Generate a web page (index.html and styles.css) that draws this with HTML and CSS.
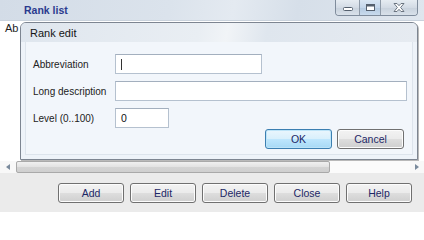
FILE: index.html
```html
<!DOCTYPE html>
<html>
<head>
<meta charset="utf-8">
<link rel="stylesheet" href="styles.css">
</head>
<body>
<div class="window">
  <div class="titlebar">
    <span class="title">Rank list</span>
    <div class="controls">
      <div class="ctl ctl-min"><svg width="12" height="8" viewBox="0 0 12 8"><rect x="1.5" y="3.5" width="9" height="3" rx="1" fill="#fff" stroke="#55606e"/></svg></div>
      <div class="ctl ctl-max"><svg width="11" height="9" viewBox="0 0 11 9"><rect x="1.5" y="1.5" width="8" height="6" fill="#fff" stroke="#55606e"/><rect x="2" y="2" width="7" height="1.5" fill="#55606e"/></svg></div>
      <div class="ctl ctl-close"><svg width="14" height="11" viewBox="0 0 14 11"><path d="M2 1.5h3l2 2.2 2-2.2h3l-3.4 4 3.4 4h-3l-2-2.2-2 2.2h-3l3.4-4z" fill="#fff" stroke="#6a7480" stroke-linejoin="round"/></svg></div>
    </div>
  </div>
  <div class="list">
    <div class="list-head"><span class="col">Ab</span></div>
    <div class="list-body"></div>
    <div class="hscroll">
      <div class="arrow left"><svg width="4" height="6" viewBox="0 0 4 6"><path d="M4 0v6L0 3z" fill="#7a8a9c"/></svg></div>
      <div class="thumb"></div>
      <div class="track"></div>
      <div class="arrow right"><svg width="4" height="6" viewBox="0 0 4 6"><path d="M0 0v6l4-3z" fill="#7a8a9c"/></svg></div>
    </div>
  </div>
  <div class="footer">
    <button class="btn">Add</button>
    <button class="btn">Edit</button>
    <button class="btn">Delete</button>
    <button class="btn">Close</button>
    <button class="btn">Help</button>
  </div>

  <div class="dialog">
    <div class="dlg-title">Rank edit</div>
    <div class="dlg-body">
      <div class="form">
        <label class="lbl">Abbreviation</label>
        <div class="input w1"><span class="caret"></span></div>
        <label class="lbl">Long description</label>
        <div class="input w2"></div>
        <label class="lbl">Level (0..100)</label>
        <div class="input w3">0</div>
      </div>
      <div class="dlg-actions">
        <button class="btn btn-default">OK</button>
        <button class="btn">Cancel</button>
      </div>
    </div>
  </div>
</div>
</body>
</html>
```

FILE: styles.css
```css
html, body {
  margin: 0;
  padding: 0;
}
body {
  width: 424px;
  height: 212px;
  overflow: hidden;
  font-family: "Liberation Sans", Arial, sans-serif;
  font-size: 10.5px;
  color: #1e1e1e;
}
.window {
  position: relative;
  width: 424px;
  height: 212px;
  display: flex;
  flex-direction: column;
  background: #ebebeb;
}
.titlebar {
  height: 20px;
  display: flex;
  align-items: flex-start;
  background: linear-gradient(100deg, #d3dce7 0%, #dbe3ec 40%, #e4eaf1 55%, #d6dfe9 70%, #dfe6ee 100%);
  border-bottom: 1px solid #c9d2dc;
}
.title {
  margin-left: 24px;
  margin-top: 4px;
  font-weight: bold;
  font-size: 10.5px;
  color: #2a3a8e;
}
.controls {
  margin-left: auto;
  margin-right: 6px;
  display: flex;
  height: 15px;
  border: 1px solid #7f8c9c;
  border-top: none;
  border-radius: 0 0 4px 4px;
  overflow: hidden;
}
.ctl {
  display: flex;
  align-items: center;
  justify-content: center;
  background: linear-gradient(#e6ecf2, #d3dbe5 50%, #c7d1dc 51%, #d9e1ea);
}
.ctl-min { width: 23px; border-right: 1px solid #8e9aa8; }
.ctl-max { width: 20px; border-right: 1px solid #8e9aa8; background: linear-gradient(#d9e6f3, #c4d6ea 50%, #b3c9e0 51%, #c9dbed); }
.ctl-close { width: 36px; }
.list {
  flex: 1;
  display: flex;
  flex-direction: column;
  background: #fff;
}
.list-head {
  height: 14px;
  display: flex;
  align-items: center;
  padding-left: 5px;
  font-size: 11px;
}
.list-body {
  flex: 1;
}
.hscroll {
  height: 12px;
  display: flex;
  align-items: stretch;
  background: #f4f4f4;
}
.arrow {
  width: 16px;
  display: flex;
  align-items: center;
  justify-content: center;
  background: #f8f8f8;
}
.arrow.right { width: 14px; }
.thumb {
  width: 314px;
  box-sizing: border-box;
  border: 1px solid #a9a9a9;
  border-radius: 2px;
  background: linear-gradient(#f0f0f0, #e2e2e2 50%, #d4d4d4 51%, #cfcfcf);
}
.track {
  flex: 1;
  background: #fbfbfb;
}
.footer {
  height: 39px;
  display: flex;
  justify-content: flex-end;
  align-items: flex-start;
  gap: 6px;
  padding: 10px 12px 0 0;
  box-sizing: border-box;
}
.btn {
  width: 66px;
  height: 20px;
  padding: 0;
  font-family: "Liberation Sans", Arial, sans-serif;
  font-size: 10.5px;
  color: #1c2766;
  border: 1px solid #707070;
  border-radius: 3px;
  background: linear-gradient(#f3f3f3, #ebebeb 48%, #dddddd 52%, #cfcfcf);
  box-shadow: inset 0 0 0 1px #fcfcfc;
}
.btn-default {
  border-color: #3c7fb1;
  background: linear-gradient(#eaf6fd, #d9f0fc 48%, #bee6fd 52%, #a7d9f5);
  box-shadow: inset 0 0 0 1px #bde4f8;
}
.dialog {
  position: absolute;
  left: 20px;
  top: 22px;
  width: 398px;
  height: 138px;
  box-sizing: border-box;
  border: 1px solid #7d8591;
  border-radius: 6px 6px 0 0;
  display: flex;
  flex-direction: column;
  background: #eef3f9;
  box-shadow: 1px 1px 0 #b9b9b9;
}
.dlg-title {
  height: 19px;
  padding-left: 9px;
  display: flex;
  align-items: center;
  font-size: 11px;
  color: #151515;
  border-radius: 5px 5px 0 0;
  background: linear-gradient(100deg, #dfe6ee 0%, #e9eef3 45%, #f1f4f7 52%, #dfe6ee 62%, #e6ebf1 100%);
}
.dlg-body {
  flex: 1;
  margin: 0 4px 4px 4px;
  padding: 12px 8px 0 7px;
  background: #f2f6fb;
  border: 1px solid #dde4ec;
  border-top: none;
  display: flex;
  flex-direction: column;
}
.form {
  display: grid;
  grid-template-columns: 82px auto;
  grid-template-rows: 20px 20px 20px;
  row-gap: 7px;
  align-items: center;
  justify-items: start;
}
.lbl {
  color: #222;
  font-size: 10px;
}
.input {
  height: 20px;
  box-sizing: border-box;
  background: #fff;
  border: 1px solid #b5c1cf;
  border-top-color: #a3afbe;
  display: flex;
  align-items: center;
  padding-left: 5px;
  font-size: 10.5px;
  color: #111;
}
.w1 { width: 147px; }
.w2 { width: 292px; }
.w3 { width: 54px; }
.caret {
  width: 1px;
  height: 11px;
  background: #333;
}
.dlg-actions {
  display: flex;
  justify-content: flex-end;
  gap: 5px;
  margin-top: 1px;
}
.dlg-actions .btn {
  width: 67px;
  height: 20px;
}
```
